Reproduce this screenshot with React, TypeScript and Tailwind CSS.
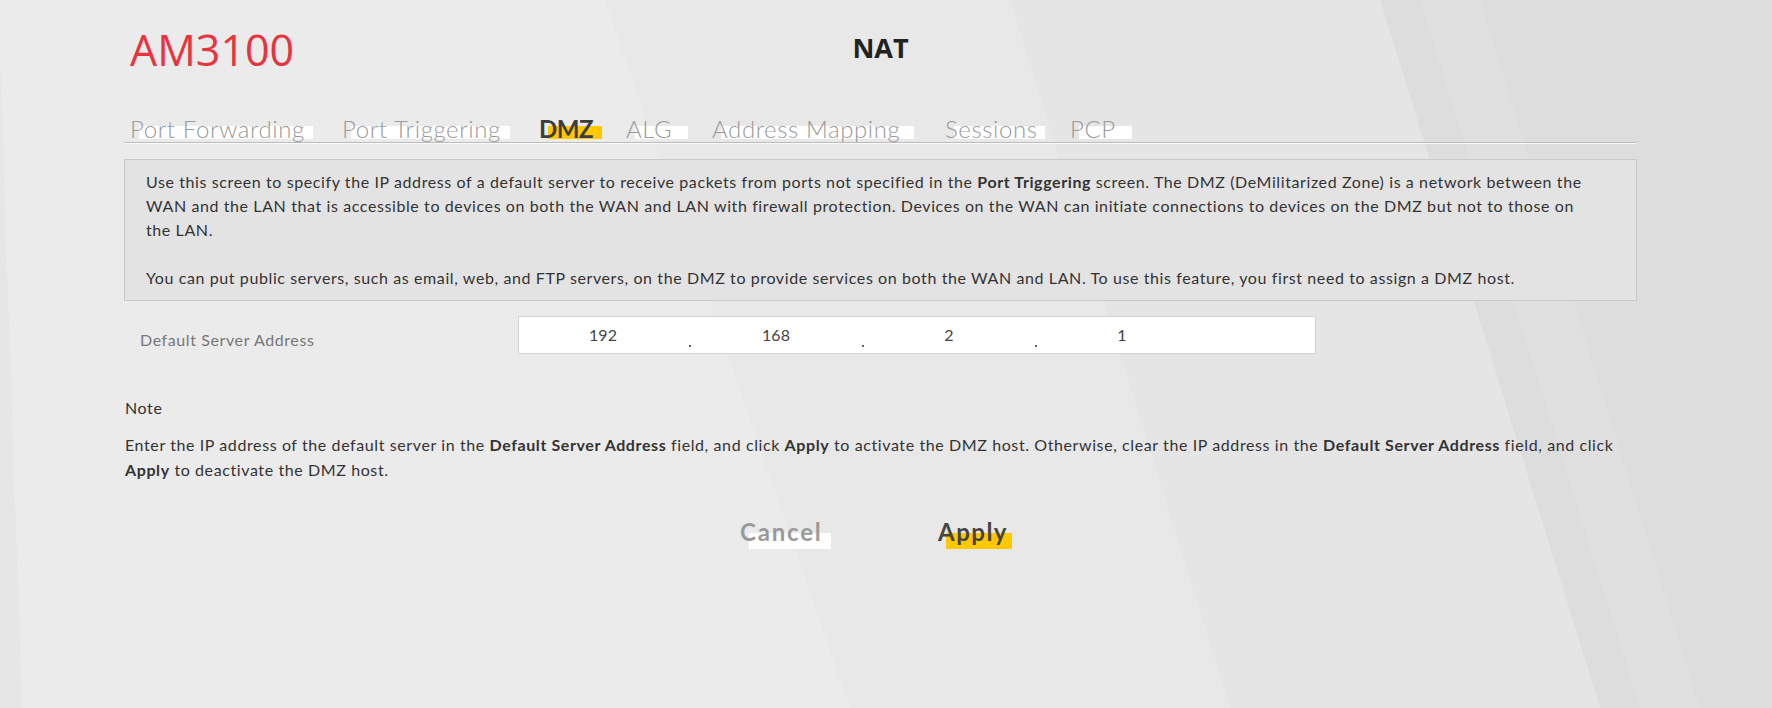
import React from "react";

const tabs = [
  { label: "Port Forwarding", w: 212, box: 174, active: false },
  { label: "Port Triggering", w: 197, box: 159, active: false },
  { label: "DMZ", w: 87, box: 54, active: true },
  { label: "ALG", w: 86, box: 53, active: false },
  { label: "Address Mapping", w: 233, box: 193, active: false },
  { label: "Sessions", w: 125, box: 91, active: false },
  { label: "PCP", w: 70, box: 53, active: false },
];

const octets = ["192", "168", "2", "1"];

function Background() {
  return (
    <svg
      className="absolute inset-0 h-full w-full"
      viewBox="0 0 1772 708"
      preserveAspectRatio="none"
    >
      <rect width="1772" height="708" fill="#ebebeb" />
      <polygon points="0,60 22,708 0,708" fill="#e6e6e6" />
      <polygon points="605,0 1010,0 1230,708 850,708" fill="#e8e8e8" />
      <polygon points="1010,0 1380,0 1600,708 1230,708" fill="#e5e5e5" />
      <polygon points="1380,0 1772,0 1772,708 1600,708" fill="#dddddd" />
      <polygon points="1420,0 1480,0 1700,708 1640,708" fill="#e0e0e0" />
    </svg>
  );
}

export default function App() {
  return (
    <div
      className="relative h-[708px] w-full overflow-hidden"
      style={{ fontFamily: "Lato, 'Liberation Sans', sans-serif" }}
    >
      <Background />
      <div className="relative w-[1637px] pl-[124px] pt-[28px]">
        {/* Header */}
        <div className="grid grid-cols-[1fr_auto_1fr] items-start">
          <div
            className="pl-[6px] text-[43px] leading-none text-[#e8343e]"
            style={{ fontFamily: "'Open Sans', sans-serif" }}
          >
            AM3100
          </div>
          <div
            className="mt-[6px] text-[27px] font-bold leading-none text-[#222]"
            style={{ fontFamily: "'Open Sans', sans-serif" }}
          >
            NAT
          </div>
          <div />
        </div>

        {/* Tabs */}
        <div className="mt-[46px]">
          <div className="flex items-end border-b border-[#bcbcbc] pb-[1px] pl-[6px]">
            {tabs.map((t) => (
              <div
                key={t.label}
                className="relative h-[24px] shrink-0"
                style={{ width: t.w }}
              >
                <div
                  className={
                    "absolute left-[9px] top-[9px] h-[13px] " +
                    (t.active ? "bg-[#ffc800]" : "bg-white")
                  }
                  style={{ width: t.box }}
                />
                <span
                  className={
                    "relative whitespace-nowrap text-[24px] leading-[24px] " +
                    (t.active
                      ? "font-bold tracking-[-0.5px] text-[#3d3d3d]"
                      : "font-light tracking-[0.6px] text-[#9a9a9a]")
                  }
                >
                  {t.label}
                </span>
              </div>
            ))}
          </div>
          <div className="h-px bg-white/80" />
        </div>

        {/* Info box */}
        <div className="mt-[15px] border border-[#c9c9c9] bg-[#e3e3e3] py-[10px] pl-[21px] text-[16px] leading-[24px] tracking-[0.6px] text-[#333]">
          <div className="whitespace-nowrap">
            Use this screen to specify the IP address of a default server to
            receive packets from ports not specified in the{" "}
            <b>Port Triggering</b> screen. The DMZ (DeMilitarized Zone) is a
            network between the
          </div>
          <div className="whitespace-nowrap">
            WAN and the LAN that is accessible to devices on both the WAN and
            LAN with firewall protection. Devices on the WAN can initiate
            connections to devices on the DMZ but not to those on
          </div>
          <div>the LAN.</div>
          <div className="h-[24px]" />
          <div className="whitespace-nowrap">
            You can put public servers, such as email, web, and FTP servers, on
            the DMZ to provide services on both the WAN and LAN. To use this
            feature, you first need to assign a DMZ host.
          </div>
        </div>

        {/* Default server address */}
        <div className="mt-[15px] flex items-start">
          <div className="mt-[12px] w-[394px] pl-[16px] text-[16px] leading-[24px] tracking-[0.6px] text-[#777]">
            Default Server Address
          </div>
          <div className="flex h-[38px] w-[798px] border border-[#cfd4da] bg-white">
            {octets.map((o, i) => (
              <React.Fragment key={i}>
                <div className="w-[168px] pt-[6px] text-center text-[16px] leading-[24px] text-[#444]">
                  {o}
                </div>
                {i < 3 && (
                  <div className="flex w-[5px] items-end justify-center pb-[6px]">
                    <span className="block h-[2px] w-[2px] bg-[#666]" />
                  </div>
                )}
              </React.Fragment>
            ))}
          </div>
        </div>

        {/* Note */}
        <div className="mt-[42px] pl-[1px] text-[16px] leading-[24px] tracking-[0.6px] text-[#333]">
          Note
        </div>
        <div className="mt-[12px] pl-[1px] text-[16px] leading-[25px] tracking-[0.6px] text-[#333]">
          <div className="whitespace-nowrap">
            Enter the IP address of the default server in the{" "}
            <b>Default Server Address</b> field, and click <b>Apply</b> to
            activate the DMZ host. Otherwise, clear the IP address in the{" "}
            <b>Default Server Address</b> field, and click
          </div>
          <div className="whitespace-nowrap">
            <b>Apply</b> to deactivate the DMZ host.
          </div>
        </div>

        {/* Buttons */}
        <div className="mt-[38px] flex justify-center gap-[107px] pr-[9px]">
          <button className="relative h-[24px] w-[91px] text-left">
            <span className="absolute left-[9px] top-[13px] h-[16px] w-[82px] bg-white" />
            <span className="relative text-[24px] font-bold leading-[24px] tracking-[1.8px] text-[#9a9a9a]">
              Cancel
            </span>
          </button>
          <button className="relative h-[24px] w-[74px] text-left">
            <span className="absolute left-[8px] top-[13px] h-[16px] w-[66px] bg-[#ffc800]" />
            <span className="relative text-[24px] font-bold leading-[24px] tracking-[1.5px] text-[#444]">
              Apply
            </span>
          </button>
        </div>
      </div>
    </div>
  );
}
